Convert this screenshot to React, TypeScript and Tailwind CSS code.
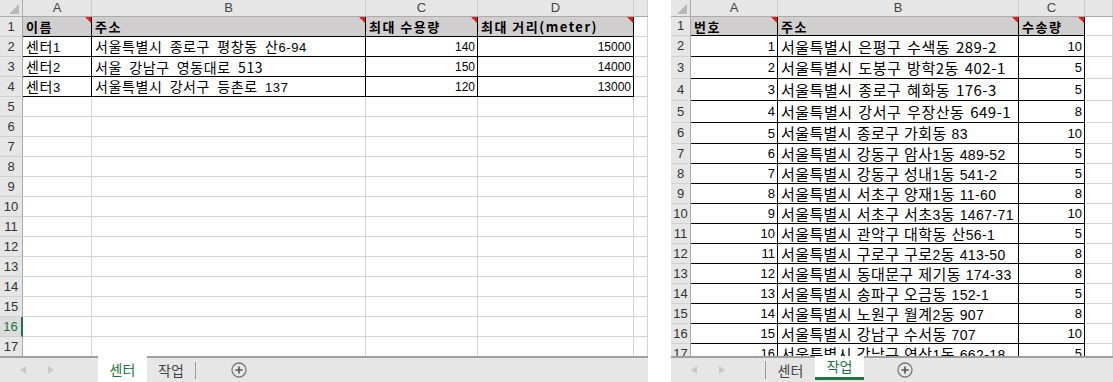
import React from "react";

type Cell = {
  t?: string;
  right?: boolean;
  hdr?: boolean;
  box?: boolean;
  note?: boolean;
  font?: "ko" | "mix" | "num" | "numSm" | "big" | "bigMix";
};

type Row = { n: number; h: string; cells: Cell[]; sel?: boolean };

const fontCls = {
  ko: "font-['Noto_Sans_CJK_KR',sans-serif] text-[14px] tracking-[0.6px] [word-spacing:3.5px]",
  mix: "font-['Noto_Sans_CJK_KR',sans-serif] text-[14px] tracking-[0.6px] [word-spacing:3.5px]",
  big: "font-['Noto_Sans_CJK_KR',sans-serif] text-[15px] tracking-[0.5px] [word-spacing:2px]",
  bigMix: "font-['Noto_Sans_CJK_KR',sans-serif] text-[15px] tracking-[0.4px] [word-spacing:1px]",
  num: "font-['Liberation_Sans',sans-serif] text-[13px]",
  numSm: "font-['Liberation_Sans',sans-serif] text-[12px]",
};

// digits drawn in a narrower latin face, like Excel's mixed fallback
const Runs = ({ t, big }: { t: string; big?: boolean }) => (
  <>
    {t.split(/([0-9-]+)/).map((p, i) =>
      /^[0-9-]+$/.test(p) ? (
        <span key={i} className={big ? "font-['Liberation_Sans',sans-serif] text-[14px]" : "font-['Liberation_Sans',sans-serif] text-[13px]"}>
          {p}
        </span>
      ) : (
        <span key={i}>{p}</span>
      )
    )}
  </>
);

const Corner = ({ w }: { w: string }) => (
  <div className={`${w} h-full shrink-0 border-r border-[#ababab] bg-[#e6e6e6] flex items-end justify-end pr-[3px] pb-[2px]`}>
    <svg width="10" height="10" viewBox="0 0 10 10">
      <polygon points="10,0 10,10 0,10" fill="#b8b8b8" />
    </svg>
  </div>
);

const SheetCell = ({ c, w }: { c: Cell; w: string }) => {
  const border = c.box ? "border-black" : "border-[#d4d4d4]";
  const bg = c.hdr ? "bg-[#d0cece]" : "bg-white";
  const font = c.hdr
    ? "font-['Noto_Sans_CJK_KR',sans-serif] text-[13px] font-bold tracking-[1.5px]"
    : fontCls[c.font ?? "mix"];
  const mixed = c.font === "mix" || c.font === "bigMix";
  return (
    <div
      className={`relative ${w} h-full shrink-0 border-r border-b ${border} ${bg} ${font} flex items-center overflow-visible whitespace-nowrap leading-none text-black ${
        c.right ? "justify-end pr-[2px]" : "justify-start pl-[3px]"
      }`}
    >
      {c.t && (mixed ? <span><Runs t={c.t} big={c.font === "bigMix"} /></span> : c.t)}
      {c.note && (
        <span className="absolute top-0 right-0 w-0 h-0 border-l-[6px] border-l-transparent border-t-[6px] border-t-[#e01e1e]" />
      )}
    </div>
  );
};

const TabBar = ({ active, navW, plusGap, sep }: { active: number; navW: string; plusGap: string; sep?: boolean }) => (
  <div className="h-[26px] shrink-0 bg-[#e6e6e6] border-t-2 border-[#a0a0a0] flex items-stretch font-['Noto_Sans_CJK_KR',sans-serif] text-[14px]">
    <div className={`${navW} shrink-0 flex items-center gap-[22px] pl-[20px] ${sep ? "border-r border-[#9a9a9a] my-[3px]" : ""}`}>
      <svg width="6" height="8" viewBox="0 0 6 8">
        <polygon points="6,0 6,8 0,4" fill="#c8c8c8" />
      </svg>
      <svg width="6" height="8" viewBox="0 0 6 8">
        <polygon points="0,0 0,8 6,4" fill="#c8c8c8" />
      </svg>
    </div>
    {["센터", "작업"].map((name, i) =>
      i === active ? (
        <div
          key={name}
          className={`w-[49px] shrink-0 bg-white flex items-center justify-center text-[#217346] -mt-[2px] ${
            sep ? "border-b-[3px] border-[#217346] mb-[2px]" : ""
          }`}
        >
          {name}
        </div>
      ) : (
        <div key={name} className="w-[49px] shrink-0 flex items-center justify-center text-[#444]">
          <span className="flex-1 text-center">{name}</span>
          {i === 1 && <span className="w-px h-[17px] bg-[#9a9a9a]" />}
        </div>
      )
    )}
    <div className={`${plusGap} shrink-0 flex items-center`}>
      <svg width="16" height="16" viewBox="0 0 16 16">
        <circle cx="8" cy="8" r="7" fill="none" stroke="#7a7a7a" strokeWidth="1.3" />
        <path d="M8 4.5v7M4.5 8h7" stroke="#555" strokeWidth="1.6" />
      </svg>
    </div>
  </div>
);

const Sheet = ({
  width,
  hdrW,
  colW,
  letters,
  rows,
  active,
  navW,
  plusGap,
  sep,
}: {
  width: string;
  hdrW: string;
  colW: string[];
  letters: string[];
  rows: Row[];
  active: number;
  navW: string;
  plusGap: string;
  sep?: boolean;
}) => (
  <div className={`${width} h-[382px] shrink-0 flex flex-col overflow-hidden`}>
    <div className="flex-1 overflow-hidden">
      <div className="flex h-[17px] border-b border-[#ababab] bg-[#e6e6e6]">
        <Corner w={hdrW} />
        {colW.map((w, i) => (
          <div
            key={i}
            className={`${w} shrink-0 h-full border-r border-[#cfcfcf] flex items-center justify-center font-['Liberation_Sans',sans-serif] text-[13px] text-[#444]`}
          >
            {letters[i]}
          </div>
        ))}
      </div>
      {rows.map((r) => (
        <div key={r.n} className={`flex ${r.h}`}>
          <div
            className={`${hdrW} shrink-0 h-full border-b border-[#d0d0d0] flex items-center justify-center font-['Liberation_Sans',sans-serif] text-[13px] ${
              r.sel ? "bg-[#dcdcdc] text-[#217346] border-r-2 border-r-[#217346]" : "bg-[#e6e6e6] text-[#333] border-r border-r-[#ababab]"
            }`}
          >
            {r.n}
          </div>
          {colW.map((w, i) => (
            <SheetCell key={i} w={w} c={r.cells[i] ?? {}} />
          ))}
        </div>
      ))}
    </div>
    <TabBar active={active} navW={navW} plusGap={plusGap} sep={sep} />
  </div>
);

const hdr = (t: string): Cell => ({ t, hdr: true, box: true, note: true });

const centerRows: Row[] = [
  { n: 1, h: "h-[20px]", cells: [hdr("이름"), hdr("주소"), hdr("최대 수용량"), hdr("최대 거리(meter)")] },
  ...[
    ["센터1", "서울특별시 종로구 평창동 산6-94", "140", "15000", "mix"],
    ["센터2", "서울 강남구 영동대로 513", "150", "14000", "ko"],
    ["센터3", "서울특별시 강서구 등촌로 137", "120", "13000", "mix"],
  ].map((d, i) => ({
    n: i + 2,
    h: "h-[20px]",
    cells: [
      { t: d[0], box: true, font: "mix" as const },
      { t: d[1], box: true, font: d[4] as "ko" | "mix" },
      { t: d[2], box: true, right: true, font: "numSm" as const },
      { t: d[3], box: true, right: true, font: "numSm" as const },
    ],
  })),
  ...Array.from({ length: 13 }, (_, i) => ({ n: i + 5, h: "h-[20px]", cells: [], sel: i + 5 === 16 })),
];

const jobs = [
  "서울특별시 은평구 수색동 289-2|10",
  "서울특별시 도봉구 방학2동 402-1|5",
  "서울특별시 종로구 혜화동 176-3|5",
  "서울특별시 강서구 우장산동 649-1|8",
  "서울특별시 종로구 가회동 83|10",
  "서울특별시 강동구 암사1동 489-52|5",
  "서울특별시 강동구 성내1동 541-2|5",
  "서울특별시 서초구 양재1동 11-60|8",
  "서울특별시 서초구 서초3동 1467-71|10",
  "서울특별시 관악구 대학동 산56-1|5",
  "서울특별시 구로구 구로2동 413-50|8",
  "서울특별시 동대문구 제기동 174-33|8",
  "서울특별시 송파구 오금동 152-1|5",
  "서울특별시 노원구 월계2동 907|8",
  "서울특별시 강남구 수서동 707|10",
  "서울특별시 강남구 역삼1동 662-18|5",
];

const jobHeights = ["h-[21px]", "h-[22px]", "h-[22px]", "h-[22px]", "h-[21px]"];

const jobRows: Row[] = [
  { n: 1, h: "h-[19px]", cells: [hdr("번호"), hdr("주소"), hdr("수송량")] },
  ...jobs.map((j, i) => {
    const [addr, qty] = j.split("|");
    return {
      n: i + 2,
      h: jobHeights[i] ?? "h-[20px]",
      cells: [
        { t: String(i + 1), box: true, right: true, font: "num" as const },
        { t: addr, box: true, font: i < 4 ? ("big" as const) : ("bigMix" as const) },
        { t: qty, box: true, right: true, font: "num" as const },
      ],
    };
  }),
];

export default function App() {
  return (
    <div className="w-[1113px] h-[382px] bg-white flex gap-[23px] overflow-hidden">
      <Sheet
        width="w-[648px]"
        hdrW="w-[23px]"
        colW={["w-[69px]", "w-[274px]", "w-[112px]", "w-[156px]", "w-[14px]"]}
        letters={["A", "B", "C", "D", ""]}
        rows={centerRows}
        active={0}
        navW="w-[98px]"
        plusGap="w-[120px] pl-[35px]"
      />
      <Sheet
        width="w-[442px]"
        hdrW="w-[20px]"
        colW={["w-[87px]", "w-[241px]", "w-[66px]", "w-[28px]"]}
        letters={["A", "B", "C", ""]}
        rows={jobRows}
        active={1}
        navW="w-[95px]"
        plusGap="w-[80px] pl-[33px]"
        sep
      />
    </div>
  );
}
